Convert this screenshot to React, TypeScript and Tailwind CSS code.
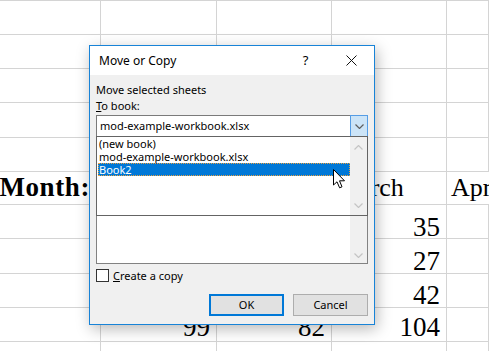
import React from "react";

type Cell = { text?: string; align?: "left" | "right"; bold?: boolean; header?: boolean };

const rowHeights = [34, 34, 34, 35, 34, 33, 34, 35, 34, 34, 20];

const rowHeightClass: Record<number, string> = {
  20: "h-[20px]",
  33: "h-[33px]",
  34: "h-[34px]",
  35: "h-[35px]",
};

// bottom padding per row, so the baselines sit where the sheet has them
const rowPad: Record<number, string> = {
  5: "pb-[3px]",
  6: "pb-[1px]",
  7: "pb-[2px]",
  8: "pb-[2px]",
  9: "pb-[4px]",
};

// sheet contents, rows x 5 columns
const sheet: Cell[][] = rowHeights.map(() => [{}, {}, {}, {}, {}]);
sheet[5][0] = { text: "Month:", align: "right", bold: true, header: true };
sheet[5][3] = { text: "March", align: "left", header: true };
sheet[5][4] = { text: "April", align: "left", header: true };
sheet[6][3] = { text: "35", align: "right" };
sheet[7][3] = { text: "27", align: "right" };
sheet[8][3] = { text: "42", align: "right" };
sheet[9][1] = { text: "99", align: "right" };
sheet[9][2] = { text: "82", align: "right" };
sheet[9][3] = { text: "104", align: "right" };

function Chevron({ down = true, color = "#5f5f5f" }: { down?: boolean; color?: string }) {
  return (
    <svg width="9" height="5" viewBox="0 0 9 5" className="block">
      <path
        d={down ? "M0.5 0.5 L4.5 4.5 L8.5 0.5" : "M0.5 4.5 L4.5 0.5 L8.5 4.5"}
        fill="none"
        stroke={color}
        strokeWidth="1.2"
      />
    </svg>
  );
}

function Sheet() {
  return (
    <div className="border-t border-[#d4d4d4]">
      {sheet.map((row, r) => (
        <div
          key={r}
          className={`grid grid-cols-[101px_116px_115px_115px_1fr] ${rowHeightClass[rowHeights[r]]}`}
        >
          {row.map((c, i) => (
            <div
              key={i}
              className={`flex items-end overflow-visible whitespace-nowrap border-b border-r border-[#d4d4d4] ${
                c.align === "right" ? "justify-end" : "justify-start"
              } ${rowPad[r] ?? ""} ${
                c.align === "right" ? (c.bold ? "pr-[10px]" : "pr-[6px]") : "pl-[4px]"
              }`}
            >
              {c.text && (
                <span
                  className={`font-['Liberation_Serif',serif] text-black ${
                    c.header ? "text-[26px] leading-[27px]" : "text-[27px] leading-[20px]"
                  } ${c.bold ? "text-[27px] font-bold tracking-[0.6px]" : ""}`}
                >
                  {c.text}
                </span>
              )}
            </div>
          ))}
        </div>
      ))}
    </div>
  );
}

function MoveOrCopyDialog() {
  const books = ["(new book)", "mod-example-workbook.xlsx", "Book2"];
  return (
    <div className="absolute left-[89px] top-[45px] flex h-[280px] w-[286px] flex-col border border-[#1883d7] bg-white font-['Noto_Sans',sans-serif] text-[11px] text-black shadow-[2px_4px_14px_rgba(0,0,0,0.28)]">
      {/* title bar */}
      <div className="flex h-[29px] items-center bg-white">
        <span className="flex-1 pl-[9px] text-[12px]">Move or Copy</span>
        <span className="flex w-[45px] justify-center text-[13px] leading-none">?</span>
        <span className="flex w-[46px] justify-center">
          <svg width="11" height="11" viewBox="0 0 11 11">
            <path d="M0.5 0.5 L10.5 10.5 M10.5 0.5 L0.5 10.5" stroke="#111" strokeWidth="1" />
          </svg>
        </span>
      </div>

      {/* body */}
      <div className="flex flex-1 flex-col bg-[#f0f0f0] px-[6px] pt-[7px]">
        <div className="leading-[16px]">Move selected sheets</div>
        <div className="leading-[16px]">
          <span className="underline">T</span>o book:
        </div>

        {/* combo box */}
        <div className="mt-[1px] flex h-[22px]">
          <div className="flex flex-1 items-center border border-r-0 border-[#7a7a7a] bg-white pl-[3px]">
            mod-example-workbook.xlsx
          </div>
          <div className="flex w-[18px] items-center justify-center border border-[#569de5] bg-[#cce4f7]">
            <Chevron />
          </div>
        </div>

        {/* sheet list with the drop down list lying over it */}
        <div className="relative h-[127px]">
          <div className="flex h-full border border-[#828282] bg-white">
            <div className="flex-1" />
            <div className="flex w-[17px] flex-col items-center justify-end bg-[#f0f0f0] pb-[5px]">
              <Chevron color="#c4c4c4" />
            </div>
          </div>

          <div className="absolute left-0 right-0 top-[-1px] flex h-[80px] border border-[#646464] bg-white">
            <ul className="flex-1 pl-[1px]">
              {books.map((b, i) => (
                <li
                  key={b}
                  className={`h-[13px] pl-[1px] leading-[13px] ${
                    i === 2
                      ? "bg-[#0078d7] text-white outline-1 outline-dotted outline-[#e8a040] -outline-offset-1"
                      : ""
                  }`}
                >
                  {b}
                </li>
              ))}
            </ul>
            <div className="flex w-[17px] flex-col items-center justify-between bg-[#f0f0f0] pb-[7px] pt-[8px]">
              <Chevron down={false} color="#c4c4c4" />
              <Chevron color="#c4c4c4" />
            </div>
          </div>
        </div>

        {/* create a copy */}
        <div className="mt-[5px] flex h-[13px] items-center gap-[4px]">
          <span className="h-[13px] w-[13px] border border-[#333] bg-white" />
          <span className="leading-[13px]">
            <span className="underline">C</span>reate a copy
          </span>
        </div>

        {/* buttons */}
        <div className="mt-[12px] flex justify-end gap-[9px]">
          <button className="flex h-[22px] w-[75px] items-center justify-center border-2 border-[#0078d7] bg-[#e1e1e1]">
            OK
          </button>
          <button className="flex h-[22px] w-[75px] items-center justify-center border border-[#adadad] bg-[#e1e1e1]">
            Cancel
          </button>
        </div>
      </div>
    </div>
  );
}

function Pointer() {
  return (
    <svg
      width="13"
      height="20"
      viewBox="0 0 13 20"
      className="pointer-events-none absolute left-[333px] top-[169px]"
    >
      <path
        d="M0.5 0.5 L0.5 16 L4 12.8 L6.6 18.8 L9 17.8 L6.5 11.8 L11.5 11.8 Z"
        fill="#fff"
        stroke="#000"
        strokeWidth="1"
        strokeLinejoin="miter"
      />
    </svg>
  );
}

export default function App() {
  return (
    <div className="relative h-[351px] w-[489px] overflow-hidden bg-white">
      <Sheet />
      <MoveOrCopyDialog />
      <Pointer />
    </div>
  );
}
